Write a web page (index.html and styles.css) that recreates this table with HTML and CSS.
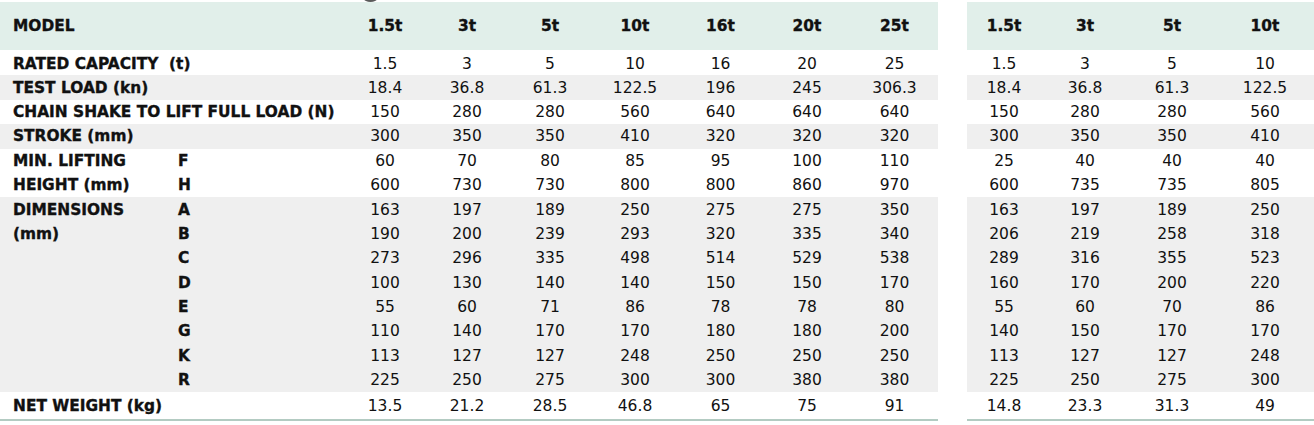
FILE: index.html
```html
<!DOCTYPE html>
<html>
<head>
<meta charset="utf-8">
<link rel="stylesheet" href="styles.css">
</head>
<body>
<div class="page">
  <span class="crop-mark"></span>
  <table class="spec main">
    <colgroup>
      <col class="c-label"><col class="c-sub">
      <col style="width:82px"><col style="width:82px"><col style="width:84px"><col style="width:86px"><col style="width:85px"><col style="width:88px"><col style="width:87px">
    </colgroup>
    <thead>
      <tr><th class="lbl" colspan="2">MODEL</th><th>1.5t</th><th>3t</th><th>5t</th><th>10t</th><th>16t</th><th>20t</th><th>25t</th></tr>
    </thead>
    <tbody>
      <tr><td class="lbl" colspan="2">RATED CAPACITY &nbsp;(t)</td><td>1.5</td><td>3</td><td>5</td><td>10</td><td>16</td><td>20</td><td>25</td></tr>
      <tr class="alt"><td class="lbl" colspan="2">TEST LOAD (kn)</td><td>18.4</td><td>36.8</td><td>61.3</td><td>122.5</td><td>196</td><td>245</td><td>306.3</td></tr>
      <tr><td class="lbl" colspan="2">CHAIN SHAKE TO LIFT FULL LOAD (N)</td><td>150</td><td>280</td><td>280</td><td>560</td><td>640</td><td>640</td><td>640</td></tr>
      <tr class="alt"><td class="lbl" colspan="2">STROKE (mm)</td><td>300</td><td>350</td><td>350</td><td>410</td><td>320</td><td>320</td><td>320</td></tr>
      <tr><td class="lbl">MIN. LIFTING</td><td class="sub">F</td><td>60</td><td>70</td><td>80</td><td>85</td><td>95</td><td>100</td><td>110</td></tr>
      <tr><td class="lbl">HEIGHT (mm)</td><td class="sub">H</td><td>600</td><td>730</td><td>730</td><td>800</td><td>800</td><td>860</td><td>970</td></tr>
      <tr class="alt"><td class="lbl">DIMENSIONS</td><td class="sub">A</td><td>163</td><td>197</td><td>189</td><td>250</td><td>275</td><td>275</td><td>350</td></tr>
      <tr class="alt"><td class="lbl">(mm)</td><td class="sub">B</td><td>190</td><td>200</td><td>239</td><td>293</td><td>320</td><td>335</td><td>340</td></tr>
      <tr class="alt"><td class="lbl"></td><td class="sub">C</td><td>273</td><td>296</td><td>335</td><td>498</td><td>514</td><td>529</td><td>538</td></tr>
      <tr class="alt"><td class="lbl"></td><td class="sub">D</td><td>100</td><td>130</td><td>140</td><td>140</td><td>150</td><td>150</td><td>170</td></tr>
      <tr class="alt"><td class="lbl"></td><td class="sub">E</td><td>55</td><td>60</td><td>71</td><td>86</td><td>78</td><td>78</td><td>80</td></tr>
      <tr class="alt"><td class="lbl"></td><td class="sub">G</td><td>110</td><td>140</td><td>170</td><td>170</td><td>180</td><td>180</td><td>200</td></tr>
      <tr class="alt"><td class="lbl"></td><td class="sub">K</td><td>113</td><td>127</td><td>127</td><td>248</td><td>250</td><td>250</td><td>250</td></tr>
      <tr class="alt"><td class="lbl"></td><td class="sub">R</td><td>225</td><td>250</td><td>275</td><td>300</td><td>300</td><td>380</td><td>380</td></tr>
      <tr class="last"><td class="lbl" colspan="2">NET WEIGHT (kg)</td><td>13.5</td><td>21.2</td><td>28.5</td><td>46.8</td><td>65</td><td>75</td><td>91</td></tr>
    </tbody>
  </table>

  <table class="spec side">
    <colgroup>
      <col style="width:74px"><col style="width:88px"><col style="width:86px"><col style="width:100px">
    </colgroup>
    <thead>
      <tr><th>1.5t</th><th>3t</th><th>5t</th><th>10t</th></tr>
    </thead>
    <tbody>
      <tr><td>1.5</td><td>3</td><td>5</td><td>10</td></tr>
      <tr class="alt"><td>18.4</td><td>36.8</td><td>61.3</td><td>122.5</td></tr>
      <tr><td>150</td><td>280</td><td>280</td><td>560</td></tr>
      <tr class="alt"><td>300</td><td>350</td><td>350</td><td>410</td></tr>
      <tr><td>25</td><td>40</td><td>40</td><td>40</td></tr>
      <tr><td>600</td><td>735</td><td>735</td><td>805</td></tr>
      <tr class="alt"><td>163</td><td>197</td><td>189</td><td>250</td></tr>
      <tr class="alt"><td>206</td><td>219</td><td>258</td><td>318</td></tr>
      <tr class="alt"><td>289</td><td>316</td><td>355</td><td>523</td></tr>
      <tr class="alt"><td>160</td><td>170</td><td>200</td><td>220</td></tr>
      <tr class="alt"><td>55</td><td>60</td><td>70</td><td>86</td></tr>
      <tr class="alt"><td>140</td><td>150</td><td>170</td><td>170</td></tr>
      <tr class="alt"><td>113</td><td>127</td><td>127</td><td>248</td></tr>
      <tr class="alt"><td>225</td><td>250</td><td>275</td><td>300</td></tr>
      <tr class="last"><td>14.8</td><td>23.3</td><td>31.3</td><td>49</td></tr>
    </tbody>
  </table>
</div>
</body>
</html>
```

FILE: styles.css
```css
html, body {
  margin: 0;
  padding: 0;
  background: #ffffff;
}

.page {
  position: relative;
  display: flex;
  align-items: flex-start;
  gap: 29px;
  padding-top: 2px;
  width: 1314px;
  height: 425px;
  overflow: hidden;
  font-family: "DejaVu Sans", "Liberation Sans", sans-serif;
  color: #111111;
}

.crop-mark {
  position: absolute;
  left: 364px;
  top: -4px;
  width: 13px;
  height: 6px;
  border-radius: 50%;
  background: #5a5a5a;
}

.spec {
  border-collapse: collapse;
  table-layout: fixed;
  flex: none;
}

.main { width: 937px; }
.side { width: 348px; }

.c-label { width: 170px; }
.c-sub { width: 174px; }

.spec thead tr {
  height: 49px;
  background: #e1efea;
  border-bottom: 3px solid #ffffff;
}

.spec th {
  padding: 0;
  font-weight: bold;
  font-size: 15.4px;
  -webkit-text-stroke: 0.35px #111111;
  text-align: center;
  vertical-align: middle;
}

.spec th.lbl {
  text-align: left;
  padding-left: 13px;
}

.spec tbody tr {
  height: 24.4px;
}

.spec tbody tr.alt {
  background: #efefef;
}

.spec tbody tr.last {
  height: 28px;
  border-bottom: 2px solid #b3cbc2;
}

.spec td {
  padding: 0;
  font-size: 15.5px;
  font-weight: normal;
  text-align: center;
  vertical-align: middle;
  white-space: nowrap;
}

.spec td.lbl,
.spec td.sub {
  text-align: left;
  font-weight: bold;
  font-size: 15.4px;
  -webkit-text-stroke: 0.35px #111111;
}

.spec td.lbl {
  padding-left: 13px;
}

.spec td.sub {
  padding-left: 8px;
}
```
